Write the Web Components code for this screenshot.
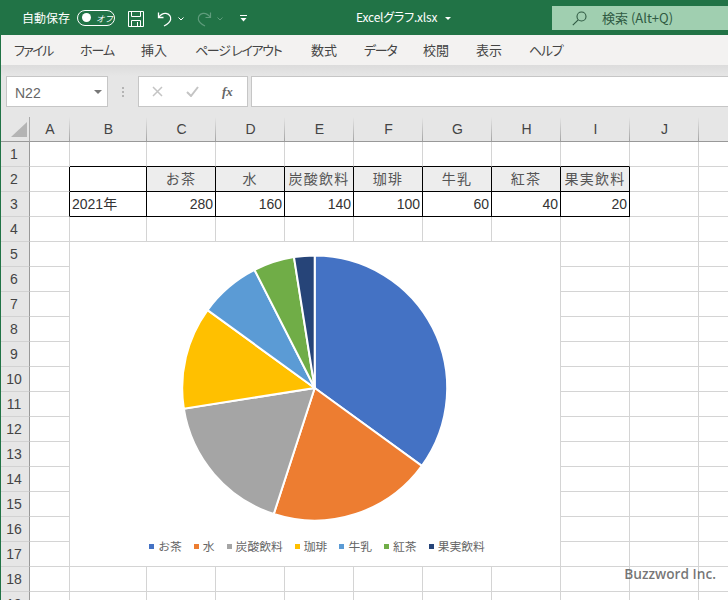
<!DOCTYPE html>
<html lang="ja">
<head>
<meta charset="utf-8">
<title>Excelグラフ.xlsx</title>
<style>
  html, body { margin: 0; padding: 0; background: #fff; overflow: hidden; }
  body {
    width: 728px;
    height: 600px;
    font-family: "Noto Sans CJK JP", "Liberation Sans", sans-serif;
  }
</style>
</head>
<body>
<excel-window>
  <title-bar></title-bar>
  <menu-bar></menu-bar>
  <formula-bar></formula-bar>
  <work-sheet>
    <pie-chart></pie-chart>
  </work-sheet>
</excel-window>

<script>
const FONT = `"Noto Sans CJK JP", "Liberation Sans", sans-serif`;

class ExcelWindow extends HTMLElement {
  constructor() {
    super();
    this.attachShadow({ mode: "open" }).innerHTML = `
      <style>
        :host { display: flex; flex-direction: column; width: 728px; height: 600px; overflow: hidden; position: relative; background: #e6e6e6; }
        .edge { position: absolute; left: 0; top: 0; bottom: 0; width: 1px; background: #217346; }
        .mark {
          position: absolute; right: 12px; top: 565px;
          font: 600 13.7px/18px "Open Sans", sans-serif; color: rgba(80,80,80,.78);
        }
      </style>
      <slot></slot>
      <div class="edge"></div>
      <div class="mark">Buzzword Inc.</div>`;
  }
}

class TitleBar extends HTMLElement {
  constructor() {
    super();
    this.attachShadow({ mode: "open" }).innerHTML = `
      <style>
        :host { display: flex; align-items: center; height: 35px; flex: none; background: #217346; color: #fff; font: 12px/16px ${FONT}; position: relative; }
        .auto { margin-left: 22px; width: 48px; white-space: nowrap; font-size: 12px; }
        .toggle {
          margin-left: 7px; width: 36px; height: 14px; border: 1px solid #fff; border-radius: 9px;
          display: flex; align-items: center; position: relative;
        }
        .toggle i { width: 9px; height: 9px; border-radius: 50%; background: #fff; margin-left: 4px; }
        .toggle span { font-size: 8.5px; line-height: 12px; margin-left: 5px; font-style: italic; }
        svg { display: block; flex: none; }
        .save { margin: 2px 0 0 13px; }
        .undo { margin: 2px 0 0 13px; }
        .chev { margin: 2px 0 0 5px; }
        .redo { margin: 2px 0 0 12px; }
        .more { margin: 2px 0 0 17px; }
        .name { position: absolute; left: 356px; top: 9px; font-size: 12px; letter-spacing: -.2px; white-space: nowrap; font-feature-settings: "palt"; }
        .caret { position: absolute; left: 445px; top: 17px; width: 0; height: 0; border: 3px solid transparent; border-top: 3px solid #fff; border-bottom: 0; }
        .search {
          position: absolute; left: 552px; right: 0; top: 6px; height: 24px; background: #a0cfb0; color: #2f5a42;
          display: flex; align-items: center; font-size: 13px;
        }
        .search svg { margin-left: 20px; }
        .search span { margin-left: 15px; white-space: nowrap; }
      </style>
      <span class="auto">自動保存</span>
      <span class="toggle"><i></i><span>オフ</span></span>
      <svg class="save" width="16" height="16" viewBox="0 0 16 16" fill="none" stroke="#fff"><path d="M.5.5h15v15H.5z"/><path d="M3.5.5v5h9v-5M3.5 15.5v-6h9v6M9.5 11v4"/></svg>
      <svg class="undo" width="16" height="16" viewBox="0 0 16 16" fill="none" stroke="#fff" stroke-width="1.3"><path d="M1.5 1.5v5h5"/><path d="M1.8 6.2C4 3.2 6.5 2 9 2.4c3.4.6 5.2 3.3 4.6 6.2-.5 2.400-2.700 4.400-6.600 6.400"/></svg>
      <svg class="chev" width="6" height="4" viewBox="0 0 6 4" fill="none" stroke="#fff"><path d="M.5.5 3 3 5.500.5"/></svg>
      <svg class="redo" width="16" height="16" viewBox="0 0 16 16" fill="none" stroke="#5f9c7c" stroke-width="1.2"><path d="M14.500 1.500v5h-5"/><path d="M14.200 6.200C12 3.200 9.500 2 7 2.400 3.600 3 1.800 5.700 2.400 8.600c.5 2.400 2.700 4.400 6.600 6.400"/></svg>
      <svg class="chev" width="6" height="4" viewBox="0 0 6 4" fill="none" stroke="#5f9c7c"><path d="M.5.5 3 3 5.500.5"/></svg>
      <svg class="more" width="7" height="7" viewBox="0 0 7 7" fill="#fff"><path d="M0 0h7v1H0zM.5 3h6L3.500 6.500z"/></svg>
      <span class="name">Excelグラフ.xlsx</span>
      <span class="caret"></span>
      <div class="search">
        <svg width="15" height="15" viewBox="0 0 15 15" fill="none" stroke="#2f5a42" stroke-width="1.1"><circle cx="9.500" cy="5.500" r="4.500"/><path d="M6.200 8.800.8 14.200"/></svg>
        <span>検索 (Alt+Q)</span>
      </div>`;
  }
}

class MenuBar extends HTMLElement {
  constructor() {
    super();
    // label, left edge in the bar, tracking
    const items = [["ファイル", 14, -1.6], ["ホーム", 80, -1], ["挿入", 141, 0], ["ページ レイアウト", 195, -1.3], ["数式", 311, 0],
                   ["データ", 364, -1.3], ["校閲", 423, 0], ["表示", 476, 0], ["ヘルプ", 529, -1.3]];
    // each tab keeps the width of the label in front of the next one
    const tabs = items.map(([label, x, track], i) => {
      const next = items[i + 1] ? items[i + 1][1] : x + 60;
      return `<span style="width:${next - x}px;letter-spacing:${track}px">${label}</span>`;
    }).join("");
    this.attachShadow({ mode: "open" }).innerHTML = `
      <style>
        :host { display: block; flex: none; height: 41px; background: linear-gradient(#f3f2f1 30px, #dcdcdc 30px, #e6e6e6 41px); }
        nav { display: flex; height: 30px; align-items: center; padding-left: 14px; font: 13px/16px ${FONT}; color: #444; font-feature-settings: "palt"; }
        span { flex: none; white-space: nowrap; }
      </style>
      <nav>${tabs}</nav>`;
  }
}

class FormulaBar extends HTMLElement {
  constructor() {
    super();
    this.attachShadow({ mode: "open" }).innerHTML = `
      <style>
        :host { display: flex; flex: none; height: 31px; padding-left: 6px; margin-bottom: 10px; color: #666; font: 14px/20px "Liberation Sans", sans-serif; }
        .box { background: #fff; border: 1px solid #c6c6c6; box-sizing: border-box; height: 31px; display: flex; align-items: center; }
        .name { width: 102px; padding: 3px 0 0 8px; }
        .name span { flex: 1; }
        .name i { width: 0; height: 0; border: 4px solid transparent; border-top: 4px solid #777; border-bottom: 0; margin: -3px 5px 0 0; }
        .dots { width: 3px; margin: 0 14px 0 13px; display: flex; flex-direction: column; justify-content: center; gap: 2px; align-items: center; }
        .dots b { width: 2px; height: 2px; background: #b4b4b4; }
        .btns { width: 110px; padding-left: 13px; gap: 23px; }
        .fx { font: italic bold 13px/16px "Liberation Serif", serif; color: #666; }
        .input { flex: 1; margin-left: 3px; border-right: 0; }
      </style>
      <div class="box name"><span>N22</span><i></i></div>
      <div class="dots"><b></b><b></b><b></b></div>
      <div class="box btns">
        <svg width="11" height="11" viewBox="0 0 11 11" stroke="#c4c4c4" stroke-width="1.500"><path d="M1 1l9 9M10 1l-9 9"/></svg>
        <svg width="13" height="11" viewBox="0 0 13 11" fill="none" stroke="#c4c4c4" stroke-width="2"><path d="M1 6l4 4 7-9"/></svg>
        <span class="fx">fx</span>
      </div>
      <div class="box input"></div>`;
  }
}

class WorkSheet extends HTMLElement {
  constructor() {
    super();
    const cols = ["A", "B", "C", "D", "E", "F", "G", "H", "I", "J", ""];
    const data = {
      2: ["", "", "お茶", "水", "炭酸飲料", "珈琲", "牛乳", "紅茶", "果実飲料"],
      3: ["", "2021年", "280", "160", "140", "100", "60", "40", "20"],
    };
    let html = `<div class="corner"><svg width="29" height="24" viewBox="0 0 29 24"><path d="M10 20 26 5v15z" fill="#b4b4b4"/></svg></div>`;
    html += cols.map((c) => `<div class="colh">${c}</div>`).join("");
    for (let r = 1; r <= 19; r++) {
      html += `<div class="rowh">${r}</div>`;
      cols.forEach((c, i) => {
        const cls = ["cell"];
        const text = (data[r] && data[r][i]) || "";
        if ((r === 2 || r === 3) && i <= 8) cls.push("br");
        if (r <= 3 && i >= 1 && i <= 8) cls.push("bb");
        if (r === 2 && i >= 2 && i <= 8) cls.push("head");
        if (r === 3 && i >= 2) cls.push("num");
        if (r === 3 && i === 1) cls.push("label");
        html += `<div class="${cls.join(" ")}">${text}</div>`;
      });
    }
    this.attachShadow({ mode: "open" }).innerHTML = `
      <style>
        :host { display: block; position: relative; flex: 1; overflow: hidden; background: #fff; }
        .grid {
          display: grid;
          grid-template-columns: 29px 40px 77px 69px 69px 69px 69px 69px 69px 69px 69px 30px;
          grid-auto-rows: 25px;
          margin-left: 1px;
          font: 14px/24px "Liberation Sans", ${FONT};
          color: #333;
        }
        .grid > div { box-sizing: border-box; white-space: nowrap; overflow: hidden; }
        .corner { background: #e6e6e6; border-right: 1px solid #aaa; border-bottom: 1px solid #999; }
        .corner svg { display: block; }
        .colh {
          background: #e6e6e6; text-align: center; color: #444;
          border-bottom: 1px solid #999;
          background-image: linear-gradient(#e6e6e6, #a4a4a4);
          background-size: 1px 100%; background-position: right top; background-repeat: no-repeat;
        }
        .rowh { background: #e6e6e6; text-align: center; color: #444; border-right: 1px solid #999; border-bottom: 1px solid #d2d2d2; padding-right: 2px; }
        .cell { border-right: 1px solid #d4d4d4; border-bottom: 1px solid #d4d4d4; }
        .br { border-right-color: #000; }
        .bb { border-bottom-color: #000; }
        .head { background: #ededed; text-align: center; color: #555; font-size: 14px; letter-spacing: 1.2px; }
        .num { text-align: right; padding-right: 2px; }
        .label { padding-left: 2px; }
      </style>
      <div class="grid">${html}</div>
      <slot></slot>`;
  }
}

class PieChart extends HTMLElement {
  constructor() {
    super();
    const series = [["お茶", 280, "#4472c4"], ["水", 160, "#ed7d31"], ["炭酸飲料", 140, "#a5a5a5"], ["珈琲", 100, "#ffc000"],
                    ["牛乳", 60, "#5b9bd5"], ["紅茶", 40, "#70ad47"], ["果実飲料", 20, "#264478"]];
    const total = series.reduce((sum, s) => sum + s[1], 0);
    const cx = 244.7, cy = 146, r = 132.5;
    let angle = 0;
    const slices = series.map(([, value, color]) => {
      const a0 = angle, a1 = angle + (value / total) * Math.PI * 2;
      angle = a1;
      const pt = (a) => `${(cx + r * Math.sin(a)).toFixed(2)} ${(cy - r * Math.cos(a)).toFixed(2)}`;
      return `<path d="M${cx} ${cy}L${pt(a0)}A${r} ${r} 0 ${a1 - a0 > Math.PI ? 1 : 0} 1 ${pt(a1)}Z" fill="${color}" stroke="#fff" stroke-width="2"/>`;
    }).join("");
    const legend = series.map(([label, , color]) => `<li><i style="background:${color}"></i>${label}</li>`).join("");
    this.attachShadow({ mode: "open" }).innerHTML = `
      <style>
        :host { display: flex; flex-direction: column; align-items: center; position: absolute; left: 70px; top: 125px; width: 490px; height: 324px; background: #fff; }
        svg { display: block; flex: none; }
        ul { display: flex; gap: 12px; list-style: none; margin: 0 0 0 4px; padding: 0; position: absolute; top: 295px; font: 11.800px/18px ${FONT}; color: #666; white-space: nowrap; }
        li { display: flex; align-items: center; gap: 4px; }
        i { width: 5px; height: 5px; flex: none; }
      </style>
      <svg width="490" height="290" viewBox="0 0 490 290">${slices}</svg>
      <ul>${legend}</ul>`;
  }
}

customElements.define("excel-window", ExcelWindow);
customElements.define("title-bar", TitleBar);
customElements.define("menu-bar", MenuBar);
customElements.define("formula-bar", FormulaBar);
customElements.define("work-sheet", WorkSheet);
customElements.define("pie-chart", PieChart);
</script>
</body>
</html>
